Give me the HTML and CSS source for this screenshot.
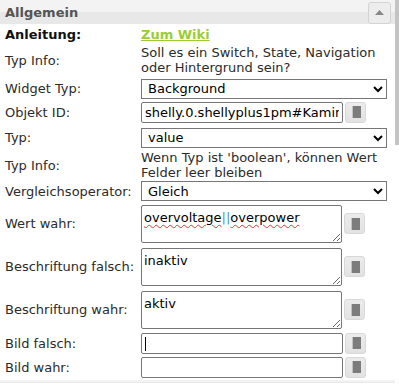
FILE: index.html
```html
<!DOCTYPE html>
<html>
    <head>
        <title>Allgemein</title>
        <link rel="stylesheet" href="styles.css">
    </head>
    <body>
        <div class="panel">
            <div class="panel-head">
                <span class="panel-title">Allgemein</span>
                <button class="collapse" type="button">
                    <svg width="9" height="5" viewBox="0 0 9 5"><path d="M0 5 L4.5 0 L9 5 Z" fill="#888"/></svg>
                </button>
            </div>

            <div class="fields">
                <div class="row r-link">
                    <div class="label strong">Anleitung:</div>
                    <div class="value"><a class="wiki" href="#">Zum Wiki</a></div>
                </div>

                <div class="row r-info">
                    <div class="label">Typ Info:</div>
                    <div class="value info">Soll es ein Switch, State, Navigation oder Hintergrund sein?</div>
                </div>

                <div class="row r-select">
                    <div class="label">Widget Typ:</div>
                    <div class="value">
                        <select class="wide">
                            <option>Background</option>
                        </select>
                    </div>
                </div>

                <div class="row r-input">
                    <div class="label">Objekt ID:</div>
                    <div class="value with-btn">
                        <input type="text" value="shelly.0.shellyplus1pm#Kamin">
                        <button class="pick" type="button"><svg width="10" height="12" viewBox="0 0 10 12"><rect x="2" y="0" width="8" height="12" fill="#7c7c7c"/><path d="M1 1h1M1 3h1M1 5h1M1 7h1M1 9h1M1 11h1" stroke="#9a9a9a" stroke-width="1"/></svg></button>
                    </div>
                </div>

                <div class="row r-select2">
                    <div class="label">Typ:</div>
                    <div class="value">
                        <select class="wide">
                            <option>value</option>
                        </select>
                    </div>
                </div>

                <div class="row r-info2">
                    <div class="label">Typ Info:</div>
                    <div class="value info">Wenn Typ ist 'boolean', können Wert Felder leer bleiben</div>
                </div>

                <div class="row r-select3">
                    <div class="label">Vergleichsoperator:</div>
                    <div class="value">
                        <select class="wide">
                            <option>Gleich</option>
                        </select>
                    </div>
                </div>

                <div class="row r-area">
                    <div class="label">Wert wahr:</div>
                    <div class="value with-btn">
                        <div class="area"><span class="typo">overvoltage</span><span class="bars">||</span><span class="typo">overpower</span></div>
                        <button class="pick" type="button"><svg width="10" height="12" viewBox="0 0 10 12"><rect x="2" y="0" width="8" height="12" fill="#7c7c7c"/><path d="M1 1h1M1 3h1M1 5h1M1 7h1M1 9h1M1 11h1" stroke="#9a9a9a" stroke-width="1"/></svg></button>
                    </div>
                </div>

                <div class="row r-area">
                    <div class="label">Beschriftung falsch:</div>
                    <div class="value with-btn">
                        <textarea class="area">inaktiv</textarea>
                        <button class="pick" type="button"><svg width="10" height="12" viewBox="0 0 10 12"><rect x="2" y="0" width="8" height="12" fill="#7c7c7c"/><path d="M1 1h1M1 3h1M1 5h1M1 7h1M1 9h1M1 11h1" stroke="#9a9a9a" stroke-width="1"/></svg></button>
                    </div>
                </div>

                <div class="row r-area">
                    <div class="label">Beschriftung wahr:</div>
                    <div class="value with-btn">
                        <textarea class="area">aktiv</textarea>
                        <button class="pick" type="button"><svg width="10" height="12" viewBox="0 0 10 12"><rect x="2" y="0" width="8" height="12" fill="#7c7c7c"/><path d="M1 1h1M1 3h1M1 5h1M1 7h1M1 9h1M1 11h1" stroke="#9a9a9a" stroke-width="1"/></svg></button>
                    </div>
                </div>

                <div class="row r-img">
                    <div class="label">Bild falsch:</div>
                    <div class="value with-btn">
                        <span class="caret-wrap"><input type="text" value=""></span>
                        <button class="pick" type="button"><svg width="10" height="12" viewBox="0 0 10 12"><rect x="2" y="0" width="8" height="12" fill="#7c7c7c"/><path d="M1 1h1M1 3h1M1 5h1M1 7h1M1 9h1M1 11h1" stroke="#9a9a9a" stroke-width="1"/></svg></button>
                    </div>
                </div>

                <div class="row r-img">
                    <div class="label">Bild wahr:</div>
                    <div class="value with-btn">
                        <input type="text" value="">
                        <button class="pick" type="button"><svg width="10" height="12" viewBox="0 0 10 12"><rect x="2" y="0" width="8" height="12" fill="#7c7c7c"/><path d="M1 1h1M1 3h1M1 5h1M1 7h1M1 9h1M1 11h1" stroke="#9a9a9a" stroke-width="1"/></svg></button>
                    </div>
                </div>
            </div>

            <div class="panel-head next"></div>
            <div class="scroll-thumb"></div>
        </div>
    </body>
</html>
```

FILE: styles.css
```css
body {
  margin: 0;
  padding: 0;
  background: #fff;
  font-family: 'DejaVu Sans', Verdana, sans-serif;
  font-size: 13px;
  color: #2b2b2b;
  height: 384px;
  overflow: hidden;
}

.panel {
  position: relative;
  width: 395px;
}

.panel-head {
  height: 24px;
  display: flex;
  align-items: center;
  justify-content: space-between;
  padding: 0 4px 0 5px;
  background: linear-gradient(#f3f3f3 0, #f3f3f3 50%, #e8e8e8 50%, #e8e8e8 100%);
}

.panel-title {
  font-weight: bold;
  color: #555;
}

.collapse {
  width: 23px;
  height: 22px;
  margin-top: 1px;
  padding: 0;
  border: 1px solid #d3d3d3;
  border-radius: 3px;
  background: #ededed;
  display: flex;
  align-items: center;
  justify-content: center;
}

.panel-head.next {
  margin-top: 1px;
  height: 3px;
}

.fields {
  padding-left: 5px;
}

.row {
  display: flex;
  align-items: center;
}

.label {
  width: 136px;
  flex-shrink: 0;
}

.strong {
  font-weight: bold;
  color: #111;
}

.value {
  flex: 1;
  display: flex;
  align-items: center;
}

.info {
  line-height: 15px;
  display: block;
}

.wiki {
  color: #9acd32;
  font-weight: bold;
}

.r-link { height: 20px; }
.r-info { height: 32px; }
.r-select { height: 25px; }
.r-input { height: 22px; }
.r-select2 { height: 25px; margin-top: 2px; }
.r-info2 { height: 30px; }
.r-select3 { height: 22px; }
.r-area { height: 43px; }
.r-img { height: 24px; }

select,
input[type="text"],
textarea,
.area {
  font-family: inherit;
  font-size: 13px;
  color: #000;
  box-sizing: border-box;
}

select.wide {
  width: 246px;
  height: 20px;
  padding: 0 2px;
  border: 1px solid #767676;
  background: #fff;
}

input[type="text"] {
  width: 202px;
  height: 21px;
  padding: 0 3px;
  border: 1px solid #767676;
  border-radius: 2px;
}

.with-btn {
  gap: 1px;
}

.area {
  width: 201px;
  height: 38px;
  padding: 4px 2px 2px;
  border: 1px solid #767676;
  border-radius: 2px;
  resize: both;
  overflow: auto;
  line-height: 15px;
  margin: 0;
  background: #fff;
}

div.area {
  overflow: hidden;
}

.typo {
  text-decoration: underline wavy #f03030;
  text-decoration-thickness: 1px;
  text-underline-offset: 2px;
}

.bars {
  color: #4a8fd8;
}

.pick {
  width: 21px;
  height: 21px;
  margin-left: 1px;
  padding: 0;
  border: 1px solid #d8d8d8;
  border-radius: 3px;
  background: linear-gradient(#ececec, #e2e2e2);
  display: flex;
  align-items: center;
  justify-content: center;
}

.caret-wrap {
  position: relative;
  display: flex;
}

.caret-wrap::after {
  content: "";
  position: absolute;
  left: 4px;
  top: 4px;
  width: 1px;
  height: 14px;
  background: #000;
}

.scroll-thumb {
  position: absolute;
  top: 0;
  right: -4px;
  width: 4px;
  height: 145px;
  background: #c4c4c4;
}
```
